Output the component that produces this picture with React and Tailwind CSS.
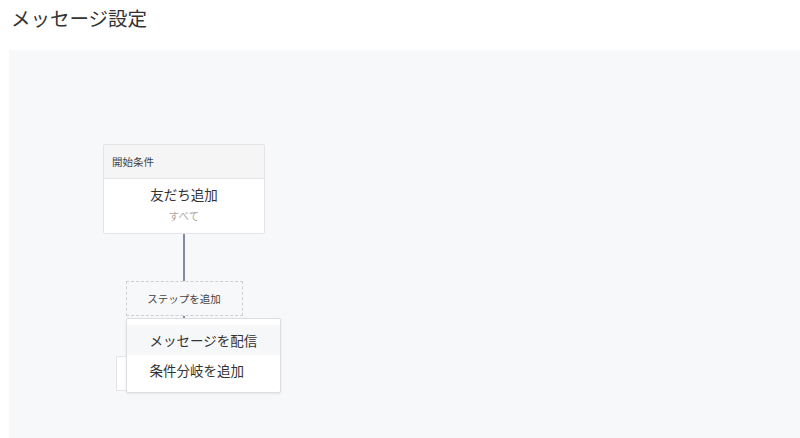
export default function App() {
  return (
    <div
      className="w-[800px] h-[438px] bg-white flex flex-col overflow-hidden text-[#333]"
      style={{ fontFamily: '"Noto Sans CJK JP", "Noto Sans", sans-serif' }}
    >
      <div className="h-[50px] shrink-0 pl-[11px] pt-[4px] text-[19.5px] leading-[28px] text-[#333]">
        メッセージ設定
      </div>
      <div className="ml-[9px] flex-1 bg-[#f7f8fa] pl-[94px] pt-[94px]">
        <div className="w-[162px] flex flex-col items-center">
          <div className="w-[162px] h-[90px] bg-white border border-[#e4e4e6] rounded-[2px] flex flex-col">
            <div className="h-[34px] shrink-0 bg-[#f5f5f5] border-b border-[#e4e4e6] px-[8px] flex items-center text-[10.5px] text-[#444]">
              開始条件
            </div>
            <div className="flex flex-col items-center pt-[5px]">
              <div className="text-[13.5px] leading-[20px] text-[#333]">友だち追加</div>
              <div className="mt-[4px] text-[10.5px] leading-[16px] text-[#aaa]">すべて</div>
            </div>
          </div>
          <div className="w-[1.5px] h-[47px] bg-[#838aa6]" />
          <div className="relative">
            <div className="w-[117px] h-[35px] border border-dashed border-[#cfcfd2] flex items-center justify-center text-[10.5px] text-[#444]">
              ステップを追加
            </div>
            <div className="absolute left-0 top-[37px] z-10 w-[155px] h-[75px] bg-white border border-[#dedee0] rounded-[2px] shadow-[0_1px_3px_rgba(0,0,0,0.08)] pt-[6px] flex flex-col">
              <div className="h-[30px] bg-[#f6f7f9] pl-[23px] flex items-center text-[13.5px] text-[#333]">
                メッセージを配信
              </div>
              <div className="h-[30px] pl-[23px] flex items-center text-[13.5px] text-[#333]">
                条件分岐を追加
              </div>
            </div>
          </div>
          <div className="w-[1.5px] h-[40px] bg-[#838aa6]" />
          <div className="w-[136px] h-[35px] bg-white border border-[#e4e4e6]" />
        </div>
      </div>
    </div>
  );
}
